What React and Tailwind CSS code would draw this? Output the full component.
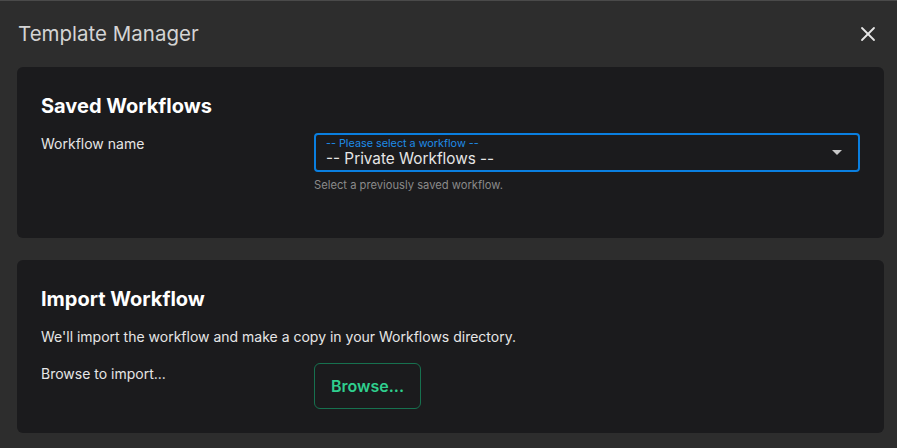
import React from 'react';
import { X } from 'lucide-react';

const Section = ({ title, children }) => (
  <div className="rounded-md bg-[#1b1b1d] px-6 pt-[25px] pb-6">
    <h2 className="text-[20px] font-bold leading-[28px] text-white">{title}</h2>
    {children}
  </div>
);

const App = () => {
  return (
    <div
      className="h-[448px] w-[897px] overflow-hidden border-t border-[#4a4a4a] bg-[#2d2d2d] pl-[17px] pr-[13px]"
      style={{ fontFamily: 'Inter, "Noto Sans", sans-serif' }}
    >
      {/* Header */}
      <div className="flex h-[66px] items-center justify-between">
        <h1 className="pl-px text-[20.5px] font-normal text-[#d4d4d4]">Template Manager</h1>
        <button className="mr-[4px] flex h-6 w-6 items-center justify-center text-[#e6e6e6]">
          <X className="h-6 w-6" strokeWidth={1.8} />
        </button>
      </div>

      {/* Saved Workflows */}
      <Section title="Saved Workflows">
        <div className="mt-[13px] flex h-[81px] items-start">
          <div className="w-[273px] pt-px text-[14px] leading-[20px] text-[#e6e6e6]">Workflow name</div>
          <div className="flex-1">
            <div className="flex h-[39px] items-center justify-between rounded border-2 border-[#0a7fe0] px-[10px]">
              <div className="flex flex-col">
                <span className="text-[10.8px] leading-[12px] text-[#1e8ce8]">-- Please select a workflow --</span>
                <span className="text-[15.3px] leading-[18px] text-[#e6e6e6]">-- Private Workflows --</span>
              </div>
              <svg width="10" height="5" viewBox="0 0 10 5" className="mr-[6px]">
                <path d="M0 0 L10 0 L5 5 Z" fill="#c8c8c8" />
              </svg>
            </div>
            <div className="mt-[5px] text-[11.2px] leading-[16px] text-[#8a8a8a]">Select a previously saved workflow.</div>
          </div>
        </div>
      </Section>

      <div className="h-[22px]" />

      {/* Import Workflow */}
      <Section title="Import Workflow">
        <p className="mt-[14px] text-[14px] leading-[20px] text-[#e6e6e6]">
          We'll import the workflow and make a copy in your Workflows directory.
        </p>
        <div className="mt-[16px] flex items-start">
          <div className="w-[273px] pt-[1px] text-[14px] leading-[20px] text-[#e6e6e6]">Browse to import...</div>
          <button className="flex h-[46px] w-[107px] items-center justify-center rounded-md border border-[#17714f] text-[16px] font-semibold text-[#2fcf8e]">
            Browse...
          </button>
        </div>
      </Section>
    </div>
  );
};

export default App;
